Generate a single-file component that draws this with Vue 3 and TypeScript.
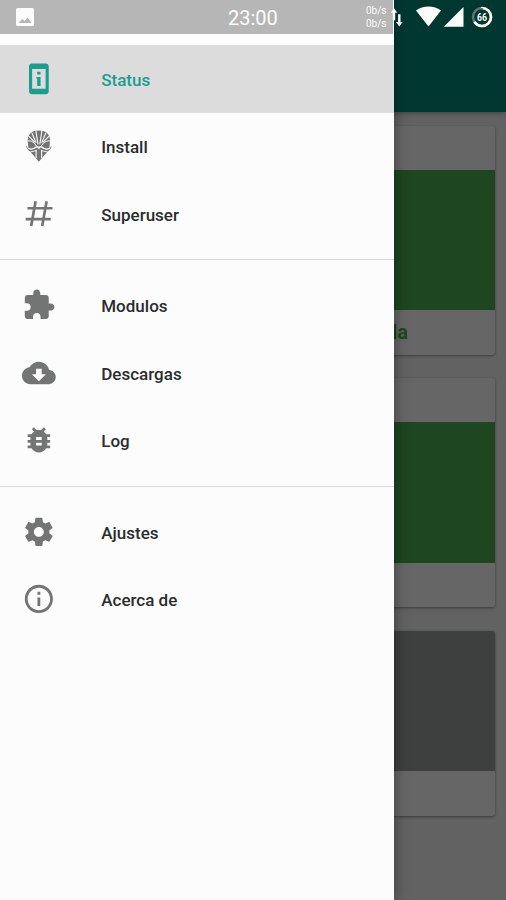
<script setup lang="ts">
type IconName = 'status' | 'install' | 'superuser' | 'modules' | 'downloads' | 'log' | 'settings' | 'about'

interface MenuItem {
  label: string
  icon: IconName
  active?: boolean
}

const groups: MenuItem[][] = [
  [
    { label: 'Status', icon: 'status', active: true },
    { label: 'Install', icon: 'install' },
    { label: 'Superuser', icon: 'superuser' },
  ],
  [
    { label: 'Modulos', icon: 'modules' },
    { label: 'Descargas', icon: 'downloads' },
    { label: 'Log', icon: 'log' },
  ],
  [
    { label: 'Ajustes', icon: 'settings' },
    { label: 'Acerca de', icon: 'about' },
  ],
]

const paths: Record<Exclude<IconName, 'install' | 'superuser'>, string> = {
  status:
    'M13.200 7h-2.400v1.800h2.400V7zm0 3.600h-3v1.200h.6V17h2.400v-6.400zM17 1.010L7 1c-1.100 0-2 .9-2 2v18c0 1.100.9 2 2 2h10c1.100 0 2-.9 2-2V3c0-1.100-.9-1.990-2-1.990zM16.800 19H7.200V5h9.600v14z',
  modules:
    'M20.500 11H19V7c0-1.100-.9-2-2-2h-4V3.500C13 2.120 11.880 1 10.500 1S8 2.120 8 3.500V5H4c-1.100 0-1.990.9-1.990 2v3.800H3.500c1.490 0 2.700 1.210 2.700 2.700s-1.210 2.700-2.700 2.700H2V20c0 1.100.9 2 2 2h3.800v-1.500c0-1.490 1.210-2.700 2.700-2.700 1.490 0 2.700 1.210 2.700 2.700V22H17c1.100 0 2-.9 2-2v-4h1.500c1.380 0 2.500-1.120 2.500-2.500S21.880 11 20.500 11z',
  downloads:
    'M19.350 10.040C18.670 6.590 15.640 4 12 4 9.110 4 6.600 5.640 5.350 8.040 2.340 8.360 0 10.910 0 14c0 3.310 2.690 6 6 6h13c2.760 0 5-2.240 5-5 0-2.640-2.050-4.780-4.650-4.960zM17 13l-5 5-5-5h3V9h4v4h3z',
  log:
    'M20 8h-2.810c-.45-.78-1.070-1.450-1.820-1.960L17 4.410 15.590 3l-2.170 2.170C12.960 5.060 12.490 5 12 5c-.49 0-.96.06-1.410.17L8.410 3 7 4.410l1.620 1.630C7.880 6.550 7.260 7.220 6.810 8H4v2h2.090c-.05.33-.09.66-.09 1v1H4v2h2v1c0 .34.04.67.09 1H4v2h2.810c1.040 1.790 2.970 3 5.190 3s4.150-1.210 5.190-3H20v-2h-2.090c.05-.33.09-.66.09-1v-1h2v-2h-2v-1c0-.34-.04-.67-.09-1H20V8zm-6 8h-4v-2h4v2zm0-4h-4v-2h4v2z',
  settings:
    'M19.430 12.980c.04-.32.07-.64.07-.98s-.03-.66-.07-.98l2.110-1.650c.19-.15.24-.42.12-.64l-2-3.460c-.12-.22-.39-.3-.61-.22l-2.490 1c-.52-.4-1.080-.73-1.690-.98l-.38-2.650C14.460 2.180 14.250 2 14 2h-4c-.25 0-.46.18-.49.42l-.38 2.650c-.61.25-1.170.59-1.690.98l-2.490-1c-.23-.09-.49 0-.61.22l-2 3.460c-.13.22-.07.49.12.64l2.110 1.650c-.04.32-.07.65-.07.98s.03.66.07.98l-2.110 1.650c-.19.15-.24.42-.12.64l2 3.460c.12.22.39.3.61.22l2.490-1c.52.4 1.080.73 1.690.98l.38 2.650c.03.24.24.42.49.42h4c.25 0 .46-.18.49-.42l.38-2.650c.61-.25 1.170-.59 1.690-.98l2.490 1c.23.09.49 0 .61-.22l2-3.460c.12-.22.07-.49-.12-.64l-2.110-1.650zM12 15.500c-1.930 0-3.500-1.570-3.500-3.500s1.570-3.500 3.500-3.500 3.500 1.570 3.500 3.500-1.570 3.500-3.500 3.500z',
  about:
    'M11 17h2v-6h-2v6zm1-15C6.480 2 2 6.480 2 12s4.480 10 10 10 10-4.480 10-10S17.520 2 12 2zm0 18c-4.410 0-8-3.590-8-8s3.590-8 8-8 8 3.590 8 8-3.590 8-8 8zM11 9h2V7h-2v2z',
}
</script>

<template>
  <div class="screen">
    <main class="page">
      <div class="toolbar"></div>
      <div class="cards">
        <section class="card">
          <div class="card-head"></div>
          <div class="card-body green"></div>
          <div class="card-foot"><span>da</span></div>
        </section>
        <section class="card">
          <div class="card-head"></div>
          <div class="card-body green"></div>
          <div class="card-foot"></div>
        </section>
        <section class="card">
          <div class="card-body gray"></div>
          <div class="card-foot"></div>
        </section>
      </div>
    </main>

    <aside class="drawer">
      <nav>
        <ul v-for="(group, g) in groups" :key="g" class="group">
          <li v-for="item in group" :key="item.label" class="item" :class="{ active: item.active }">
            <svg v-if="item.icon === 'install'" class="icon" viewBox="0 0 34 34">
              <path d="M17 1.500C10.500 1.500 6 4.500 5.700 11.500L6.600 21.500L11.500 26.500L17 33L22.500 26.500L27.400 21.500L28.300 11.500C28 4.500 23.500 1.500 17 1.500Z" fill="currentColor" />
              <g fill="none" stroke="#fcfcfc" stroke-linecap="round">
                <path d="M14 2L16 15M20 2L18 15M10 4L14 13.500M24 4L20 13.500M7 7.500L12.500 13M27 7.500L21.500 13" stroke-width="1.100" />
                <path d="M6 12C9.500 11.500 12.500 13.500 14.800 17.500M28 12C24.500 11.500 21.500 13.500 19.200 17.500" stroke-width="1" />
                <path d="M4.500 18.500C8 21.500 12 20 14 18.300C15.500 17 16.500 18.500 17 19.300C17.500 18.500 18.500 17 20 18.300C22 20 26 21.500 29.500 18.500" stroke-width="1.500" />
                <path d="M6.500 23.700C10 23 13 22.200 14.500 21.500M27.500 23.700C24 23 21 22.200 19.500 21.500M14.200 22V29M19.800 22V29" stroke-width="1.100" />
              </g>
              <path d="M4.700 17.500C5.500 22.800 11 22.500 14.300 20.300M29.300 17.500C28.500 22.800 23 22.500 19.700 20.300" fill="none" stroke="currentColor" stroke-width=".9" />
            </svg>
            <svg v-else-if="item.icon === 'superuser'" class="icon" viewBox="0 0 34 34">
              <path d="M13.700 4.200L9.200 29.300M24.800 4.200L20.300 29.300M5.500 11.300H30.700M3.700 22.300H28.900" fill="none" stroke="currentColor" stroke-width="2.700" />
            </svg>
            <svg v-else class="icon" viewBox="0 0 24 24">
              <path :d="paths[item.icon]" fill="currentColor" />
            </svg>
            <span class="label">{{ item.label }}</span>
          </li>
        </ul>
      </nav>
    </aside>

    <header class="status-bar">
      <svg class="photo" viewBox="0 0 18 18">
        <path fill-rule="evenodd" fill="#fcfcfc" d="M1.500 0H16.500Q18 0 18 1.500V16.500Q18 18 16.500 18H1.500Q0 18 0 16.500V1.500Q0 0 1.500 0ZM2.500 15H15.700L11.500 9.500L8.700 13L6.300 11Z" />
      </svg>
      <span class="clock">23:00</span>
      <div class="speed"><span>0b/s</span><span>0b/s</span></div>
      <svg class="signals" viewBox="0 0 116 34">
        <g fill="#fcfcfc">
          <path d="M4 8.300L7.300 12.700H5.200V20.300H2.800V12.700H.7ZM9.300 26.500L6 22H8.100V14.300H10.500V22H12.600Z" />
          <path d="M26 10.500C33 5 44 5 51 10.500L38.500 26.500Z" />
          <path d="M73.500 7V26.700H53.800Z" />
        </g>
        <circle cx="92" cy="17" r="9" fill="none" stroke="#66706c" stroke-width="2.500" />
        <circle cx="92" cy="17" r="9" fill="none" stroke="#fcfcfc" stroke-width="2.700" pathLength="100" stroke-dasharray="66 34" transform="rotate(-90 92 17)" />
        <text x="92" y="21" text-anchor="middle" textLength="10" lengthAdjust="spacingAndGlyphs">66</text>
      </svg>
    </header>
  </div>
</template>

<style>
body {
  margin: 0;
}
</style>

<style scoped>
.screen {
  position: relative;
  width: 506px;
  height: 900px;
  overflow: hidden;
  background: #626262;
  font-family: Roboto, 'Liberation Sans', sans-serif;
}

.toolbar {
  height: 112px;
  background: #003831;
  box-shadow: 0 1px 5px rgba(0, 0, 0, 0.35);
}

.cards {
  display: flex;
  flex-direction: column;
  gap: 23.500px;
  padding: 13.500px 11px 0;
}

.card {
  overflow: hidden;
  border-radius: 3px;
  background: #666;
  box-shadow: 0 1px 3px rgba(0, 0, 0, 0.4);
}

.card-head {
  height: 44px;
}

.card-body {
  height: 140.500px;
}

.green {
  background: #1e4620;
}

.gray {
  background: #3e403f;
}

.card-foot {
  display: flex;
  justify-content: flex-end;
  align-items: center;
  box-sizing: border-box;
  height: 44.500px;
  padding-right: 87px;
  color: #1e4620;
  font-size: 20px;
  font-weight: 700;
}

.drawer {
  position: absolute;
  top: 0;
  left: 0;
  box-sizing: border-box;
  width: 393.500px;
  height: 900px;
  padding-top: 45px;
  background: #fcfcfc;
  box-shadow: 0 0 14px rgba(0, 0, 0, 0.4);
}

.group {
  margin: 0;
  padding: 0;
  list-style: none;
}

.group + .group {
  margin-top: 11.500px;
  padding-top: 11.500px;
  border-top: 1.400px solid #d8d9d8;
}

.item {
  display: flex;
  align-items: center;
  gap: 45.250px;
  box-sizing: border-box;
  height: 67.500px;
  padding-left: 22.250px;
  color: #727573;
}

.icon {
  flex: none;
  width: 33.750px;
  height: 33.750px;
}

.label {
  padding-top: 2px;
  color: #2b2d2c;
  font-size: 17px;
  font-weight: 500;
  line-height: 24px;
}

.active {
  background: #dcdcdc;
}

.active,
.active .label {
  color: #1b9e8e;
}

.status-bar {
  position: absolute;
  top: 0;
  left: 0;
  display: grid;
  grid-template-columns: 228px 138px 24px 116px;
  align-items: center;
  width: 506px;
  height: 34px;
  background: linear-gradient(to right, #b6b6b6 393.500px, transparent 393.500px);
  color: #fcfcfc;
}

.photo {
  width: 18px;
  height: 18px;
  margin-left: 16px;
}

.clock {
  padding-top: 1px;
  font-size: 20px;
  line-height: 24px;
}

.speed {
  display: flex;
  flex-direction: column;
  font-size: 10px;
  line-height: 13px;
}

.signals {
  width: 116px;
  height: 34px;
}

.signals text {
  fill: #fcfcfc;
  font-size: 11px;
  font-weight: 700;
}
</style>
